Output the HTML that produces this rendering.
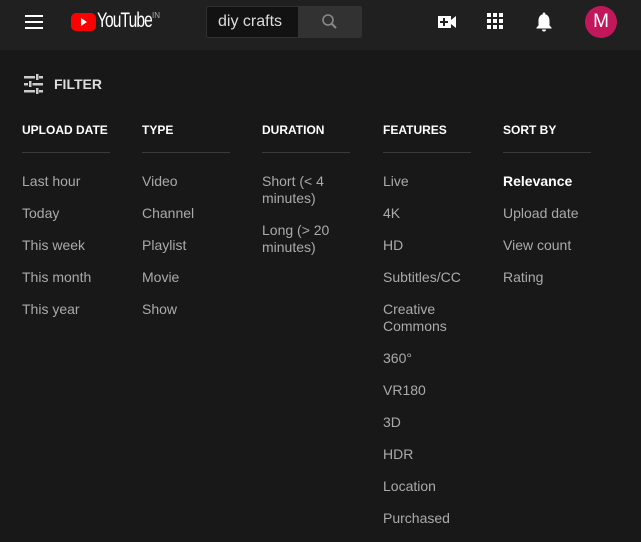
<!DOCTYPE html>
<html><head><style>
*{margin:0;padding:0;box-sizing:border-box}
body{width:641px;height:539px;overflow:hidden;background:#181818;font-family:"Liberation Sans",Arial,sans-serif;position:relative}
.hdr{position:absolute;left:0;top:0;width:641px;height:50px;background:#202020}
.abs{position:absolute}
.col{position:absolute;top:0;width:88px}
.h{position:absolute;top:123px;font-size:12px;font-weight:bold;color:#fff;white-space:nowrap}
.ul{position:absolute;top:152px;width:88px;height:1px;background:#3a3a3a}
.items{position:absolute;top:173px;font-size:14px;line-height:17px;color:#aaa}
.items div{margin-bottom:15px;width:90px}
</style></head><body>
<div class="hdr"></div>
<div class="abs" style="left:25px;top:15px;width:18px;height:2px;background:#fff"></div>
<div class="abs" style="left:25px;top:21px;width:18px;height:2px;background:#fff"></div>
<div class="abs" style="left:25px;top:27px;width:18px;height:2px;background:#fff"></div>
<div class="abs" style="left:71px;top:13px;width:25px;height:18px;background:#f00;border-radius:5px"></div>
<svg class="abs" style="left:71px;top:13px" width="25" height="18"><polygon points="10,5 16,9 10,13" fill="#fff"/></svg>
<div class="abs" style="left:97px;top:9px;color:#fff;font-size:21px;letter-spacing:-1.2px;transform:scaleX(.74);transform-origin:left">YouTube</div>
<div class="abs" style="left:152px;top:11px;color:#aaa;font-size:8px">IN</div>
<div class="abs" style="left:206px;top:6px;width:93px;height:32px;background:#121212;border:1px solid #303030;border-radius:2px 0 0 2px"></div>
<div class="abs" style="left:218px;top:13px;color:#ddd;font-size:16px">diy crafts</div>
<div class="abs" style="left:298px;top:6px;width:64px;height:32px;background:#323232;border-radius:0 2px 2px 0"></div>
<svg class="abs" style="left:321px;top:13px" width="18" height="18"><circle cx="7" cy="7" r="5" stroke="#888" stroke-width="1.6" fill="none"/><line x1="10.5" y1="10.5" x2="15" y2="15" stroke="#888" stroke-width="2"/></svg>
<svg class="abs" style="left:437px;top:12px" width="22" height="20"><rect x="1" y="4" width="13" height="12" fill="#fff"/><polygon points="14,8 19,4 19,16 14,12" fill="#fff"/><rect x="6" y="6" width="2" height="8" fill="#202020"/><rect x="3" y="9" width="8" height="2" fill="#202020"/></svg>
<svg class="abs" style="left:487px;top:13px" width="18" height="18"><g fill="#fff"><rect x="0" y="0" width="4" height="4"/><rect x="6" y="0" width="4" height="4"/><rect x="12" y="0" width="4" height="4"/><rect x="0" y="6" width="4" height="4"/><rect x="6" y="6" width="4" height="4"/><rect x="12" y="6" width="4" height="4"/><rect x="0" y="12" width="4" height="4"/><rect x="6" y="12" width="4" height="4"/><rect x="12" y="12" width="4" height="4"/></g></svg>
<svg class="abs" style="left:534px;top:11px" width="20" height="22"><path d="M10 1.5c-.8 0-1.3.6-1.3 1.3v.6C6 4 4.5 6.5 4.5 9.5v5L2.5 16.5v1h15v-1l-2-2v-5c0-3-1.5-5.5-4.2-6.1v-.6c0-.7-.5-1.3-1.3-1.3z" fill="#fff"/><path d="M8 18.5h4a2 2 0 0 1-4 0z" fill="#fff"/></svg>
<div class="abs" style="left:585px;top:6px;width:32px;height:32px;border-radius:50%;background:#c2185b;color:#fff;font-size:19px;text-align:center;line-height:32px">M</div>
<svg class="abs" style="left:24px;top:74px" width="20" height="20"><g fill="#ccc"><rect x="0" y="2" width="11" height="2.5"/><rect x="12" y="0" width="2.5" height="6"/><rect x="15" y="2" width="4" height="2.5"/><rect x="0" y="9" width="4" height="2.5"/><rect x="5" y="7" width="2.5" height="6"/><rect x="8.5" y="9" width="10.5" height="2.5"/><rect x="0" y="16" width="11" height="2.5"/><rect x="12" y="14" width="2.5" height="6"/><rect x="15" y="16" width="4" height="2.5"/></g></svg>
<div class="abs" style="left:54px;top:76px;color:#ddd;font-size:14px;font-weight:bold">FILTER</div>

<div class="col" style="left:22px"><div class="h">UPLOAD DATE</div><div class="ul"></div><div class="items"><div>Last hour</div><div>Today</div><div>This week</div><div>This month</div><div>This year</div></div></div>
<div class="col" style="left:142px"><div class="h">TYPE</div><div class="ul"></div><div class="items"><div>Video</div><div>Channel</div><div>Playlist</div><div>Movie</div><div>Show</div></div></div>
<div class="col" style="left:262px"><div class="h">DURATION</div><div class="ul"></div><div class="items"><div>Short (&lt; 4 minutes)</div><div>Long (&gt; 20 minutes)</div></div></div>
<div class="col" style="left:383px"><div class="h">FEATURES</div><div class="ul"></div><div class="items"><div>Live</div><div>4K</div><div>HD</div><div>Subtitles/CC</div><div>Creative Commons</div><div>360°</div><div>VR180</div><div>3D</div><div>HDR</div><div>Location</div><div>Purchased</div></div></div>
<div class="col" style="left:503px"><div class="h">SORT BY</div><div class="ul"></div><div class="items"><div style="color:#fff;font-weight:bold">Relevance</div><div>Upload date</div><div>View count</div><div>Rating</div></div></div>
</body></html>
